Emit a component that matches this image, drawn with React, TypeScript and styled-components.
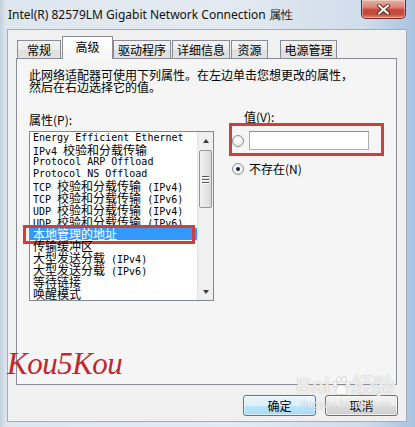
import React from 'react';
import styled, { createGlobalStyle, css } from 'styled-components';

const GlobalStyle = createGlobalStyle`
  html, body {
    margin: 0;
    padding: 0;
    background: #ffffff;
  }
  * {
    box-sizing: border-box;
  }
`;

const UI_FONT = `"Noto Sans CJK SC", "Noto Sans", sans-serif`;

const Window = styled.div`
  position: relative;
  width: 415px;
  height: 427px;
  display: flex;
  flex-direction: column;
  padding: 0 8px 5px 7px;
  overflow: hidden;
  background: linear-gradient(
    90deg,
    #c3d0de 0px,
    #dde6ef 6px,
    #e4eaf1 55%,
    #cfdceb 88%,
    #a9c3e0 100%
  );
  font-family: ${UI_FONT};
  font-size: 12px;
  color: #000;
`;

const TitleBar = styled.div`
  height: 29px;
  display: flex;
  justify-content: space-between;
  align-items: flex-start;
  padding-left: 1px;
`;

const TitleText = styled.div`
  align-self: center;
  font-family: "Noto Sans", sans-serif;
  font-size: 12px;
  line-height: 14px;
  margin-top: 1px;
  color: #111;
  white-space: nowrap;
`;

const CloseButton = styled.div`
  width: 45px;
  height: 19px;
  margin-right: 1px;
  border: 1px solid #6e2b24;
  border-top: none;
  border-radius: 0 0 5px 5px;
  background: linear-gradient(
    180deg,
    #e8b1a6 0%,
    #d98577 40%,
    #c5473b 55%,
    #c64b3d 80%,
    #dc8d7c 100%
  );
  box-shadow: inset 0 0 0 1px rgba(255, 255, 255, 0.35);
  display: flex;
  align-items: center;
  justify-content: center;
`;

const Client = styled.div`
  flex: 1;
  display: flex;
  flex-direction: column;
  border: 1px solid #a3aebb;
  background: #f0f0f0;
  padding: 6px 9px 5px 8px;
`;

const TabRow = styled.div`
  display: flex;
  align-items: flex-end;
  height: 23px;
  margin-bottom: -1px;
  padding-left: 1px;
  position: relative;
  z-index: 1;
`;

const Tab = styled.div<{ $active?: boolean; $w: number; $ml?: number }>`
  width: ${p => p.$w}px;
  margin-left: ${p => p.$ml ?? 0}px;
  border: 1px solid #898c95;
  border-bottom: none;
  display: flex;
  justify-content: center;
  font-size: 12px;
  line-height: 14px;
  white-space: nowrap;
  ${p =>
    p.$active
      ? css`
          height: 23px;
          padding-top: 3px;
          background: linear-gradient(180deg, #ffffff 0%, #f6f6f6 100%);
        `
      : css`
          height: 18px;
          margin-bottom: 1px;
          padding-top: 2px;
          background: linear-gradient(180deg, #f3f3f3 0%, #ebebeb 50%, #dedede 51%, #e3e3e3 100%);
        `}
`;

const Panel = styled.div`
  flex: 1;
  border: 1px solid #898c95;
  background: #f5f5f5;
  padding: 10px 12px;
  display: flex;
  flex-direction: column;
`;

const Description = styled.div`
  font-size: 12px;
  line-height: 12px;
  white-space: nowrap;
`;

const Columns = styled.div`
  display: flex;
  gap: 15px;
  margin-top: 18px;
`;

const LeftColumn = styled.div`
  width: 185px;
  padding-top: 3px;
  display: flex;
  flex-direction: column;
`;

const FieldLabel = styled.div<{ $indent?: number }>`
  font-size: 12px;
  line-height: 12px;
  margin-left: ${p => p.$indent ?? 0}px;
  white-space: nowrap;
`;

const ListBox = styled.div`
  margin-top: 5px;
  height: 170px;
  border: 1px solid #828790;
  background: #fff;
  display: flex;
`;

const ListItems = styled.div`
  flex: 1;
  display: flex;
  flex-direction: column;
`;

const ListItem = styled.div<{ $selected?: boolean }>`
  position: relative;
  height: 12px;
  line-height: 12px;
  padding-left: 3px;
  white-space: pre;
  font-family: "DejaVu Sans Mono", "Liberation Mono", monospace;
  font-size: 10px;
  color: ${p => (p.$selected ? '#fff' : '#000')};
  background: ${p => (p.$selected ? '#3399ff' : 'transparent')};
`;

const Cjk = styled.span`
  font-family: "Noto Sans CJK SC", sans-serif;
  font-size: 12px;
  line-height: 12px;
`;

const RedMark = styled.div`
  position: absolute;
  left: -7px;
  right: 2px;
  top: -3px;
  bottom: -4px;
  border: 3px solid #c9403d;
  pointer-events: none;
`;

const ScrollBar = styled.div`
  width: 16px;
  border-left: 1px solid #e6e6e6;
  background: #f0f0f0;
  display: flex;
  flex-direction: column;
`;

const ScrollArrow = styled.div<{ $down?: boolean }>`
  height: 17px;
  display: flex;
  align-items: center;
  justify-content: center;

  &::after {
    content: '';
    width: 0;
    height: 0;
    border-left: 3.5px solid transparent;
    border-right: 3.5px solid transparent;
    ${p =>
      p.$down
        ? css`border-top: 4px solid #3b3b3b;`
        : css`border-bottom: 4px solid #3b3b3b;`}
  }
`;

const Track = styled.div`
  flex: 1;
  padding-top: 1px;
`;

const Thumb = styled.div`
  height: 58px;
  margin: 0 1px;
  border: 1px solid #979797;
  border-radius: 2px;
  background: linear-gradient(90deg, #f2f2f2 0%, #e6e6e6 50%, #d8d8d8 100%);
  display: flex;
  flex-direction: column;
  align-items: center;
  justify-content: center;
  gap: 2px;
`;

const Grip = styled.div`
  width: 7px;
  height: 1px;
  background: #595959;
  box-shadow: 0 1px 0 #ffffff;
`;

const RightColumn = styled.div`
  flex: 1;
  display: flex;
  flex-direction: column;
`;

const ValueFrame = styled.div`
  width: 155px;
  border: 3px solid #c9403d;
  padding: 5px 12px 3px 0;
  display: flex;
  align-items: center;
  gap: 5px;
`;

const Radio = styled.span<{ $checked?: boolean }>`
  width: 12px;
  height: 12px;
  flex: none;
  border-radius: 50%;
  border: 1px solid #8e8f8f;
  background: radial-gradient(circle at 50% 40%, #ffffff 0%, #ececec 70%, #dcdcdc 100%);
  display: flex;
  align-items: center;
  justify-content: center;

  &::after {
    content: '';
    width: 4px;
    height: 4px;
    border-radius: 50%;
    background: ${p => (p.$checked ? '#16213a' : 'transparent')};
  }
`;

const TextBox = styled.div`
  width: 121px;
  height: 19px;
  border: 1px solid #abadb3;
  border-top-color: #8c8f96;
  background: #fff;
`;

const RadioRow = styled.div`
  display: flex;
  align-items: center;
  gap: 5px;
  margin-top: 7px;
  padding-left: 3px;
  line-height: 12px;
`;

const ButtonRow = styled.div`
  display: flex;
  justify-content: flex-end;
  gap: 9px;
  margin-top: 10px;
  margin-right: -1px;
`;

const DialogButton = styled.div<{ $primary?: boolean }>`
  width: 73px;
  height: 21px;
  border-radius: 3px;
  display: flex;
  align-items: center;
  justify-content: center;
  font-size: 12px;
  line-height: 12px;
  ${p =>
    p.$primary
      ? css`
          border: 1px solid #3c7fb1;
          background: linear-gradient(180deg, #eaf6fd 0%, #d9f0fc 50%, #bee6fd 51%, #a7d9f5 100%);
          box-shadow: inset 0 0 0 1px rgba(255, 255, 255, 0.6);
        `
      : css`
          border: 1px solid #707070;
          background: linear-gradient(180deg, #f2f2f2 0%, #ebebeb 50%, #dddddd 51%, #cfcfcf 100%);
          box-shadow: inset 0 0 0 1px rgba(255, 255, 255, 0.7);
        `}
`;

const Signature = styled.div`
  position: absolute;
  left: 7px;
  top: 348px;
  font-family: "Liberation Serif", serif;
  font-style: italic;
  font-size: 31px;
  line-height: 31px;
  color: #c1272d;
  letter-spacing: -0.5px;
  pointer-events: none;
`;

const BaiduMark = styled.div`
  position: absolute;
  left: 296px;
  top: 375px;
  display: flex;
  flex-direction: column;
  align-items: center;
  color: rgba(255, 255, 255, 0.8);
  text-shadow: 0 0 1px rgba(140, 140, 140, 0.7);
  pointer-events: none;
`;

const BaiduLogo = styled.div`
  display: flex;
  align-items: flex-end;
  font-family: "Liberation Sans", sans-serif;
  font-weight: bold;
  font-size: 22px;
  line-height: 22px;
`;

const BaiduSub = styled.div`
  font-family: "Liberation Sans", sans-serif;
  font-size: 10px;
  line-height: 10px;
  margin-top: 3px;
  letter-spacing: 0.5px;
`;

const ITEMS = [
  'Energy Efficient Ethernet',
  'IPv4 校验和分载传输',
  'Protocol ARP Offload',
  'Protocol NS Offload',
  'TCP 校验和分载传输 (IPv4)',
  'TCP 校验和分载传输 (IPv6)',
  'UDP 校验和分载传输 (IPv4)',
  'UDP 校验和分载传输 (IPv6)',
  '本地管理的地址',
  '传输缓冲区',
  '大型发送分载 (IPv4)',
  '大型发送分载 (IPv6)',
  '等待链接',
  '唤醒模式',
];

const SELECTED = 8;

// split latin / chinese runs so latin stays in the narrow mono face
const mixed = (s: string) =>
  s.split(/([\u3400-\u9fff]+)/).filter(Boolean).map((part, i) =>
    /[\u3400-\u9fff]/.test(part) ? <Cjk key={i}>{part}</Cjk> : <span key={i}>{part}</span>
  );

const TABS = [
  { label: '常规', w: 44, ml: 0 },
  { label: '高级', w: 51, ml: 1, active: true },
  { label: '驱动程序', w: 58, ml: 0 },
  { label: '详细信息', w: 58, ml: 1 },
  { label: '资源', w: 37, ml: 1 },
  { label: '电源管理', w: 57, ml: 12 },
];

export default function App() {
  return (
    <>
      <GlobalStyle />
      <Window>
        <TitleBar>
          <TitleText>Intel(R) 82579LM Gigabit Network Connection 属性</TitleText>
          <CloseButton>
            <svg width="13" height="11" viewBox="0 0 13 11">
              <path d="M2 1.5 L11 9.5 M11 1.5 L2 9.5" stroke="#5a2019" strokeWidth="4" strokeLinecap="round" />
              <path d="M2 1.5 L11 9.5 M11 1.5 L2 9.5" stroke="#ffffff" strokeWidth="2.2" strokeLinecap="round" />
            </svg>
          </CloseButton>
        </TitleBar>

        <Client>
          <TabRow>
            {TABS.map(t => (
              <Tab key={t.label} $w={t.w} $ml={t.ml} $active={t.active}>
                {t.label}
              </Tab>
            ))}
          </TabRow>

          <Panel>
            <Description>
              此网络适配器可使用下列属性。在左边单击您想更改的属性，
              <br />
              然后在右边选择它的值。
            </Description>

            <Columns>
              <LeftColumn>
                <FieldLabel>属性(P):</FieldLabel>
                <ListBox>
                  <ListItems>
                    {ITEMS.map((item, i) => (
                      <ListItem key={item} $selected={i === SELECTED}>
                        {mixed(item)}
                        {i === SELECTED && <RedMark />}
                      </ListItem>
                    ))}
                  </ListItems>
                  <ScrollBar>
                    <ScrollArrow />
                    <Track>
                      <Thumb>
                        <Grip />
                        <Grip />
                        <Grip />
                      </Thumb>
                    </Track>
                    <ScrollArrow $down />
                  </ScrollBar>
                </ListBox>
              </LeftColumn>

              <RightColumn>
                <FieldLabel $indent={15}>值(V):</FieldLabel>
                <ValueFrame>
                  <Radio />
                  <TextBox />
                </ValueFrame>
                <RadioRow>
                  <Radio $checked />
                  <span>不存在(N)</span>
                </RadioRow>
              </RightColumn>
            </Columns>
          </Panel>

          <ButtonRow>
            <DialogButton $primary>确定</DialogButton>
            <DialogButton>取消</DialogButton>
          </ButtonRow>
        </Client>

        <Signature>Kou5Kou</Signature>
        <BaiduMark>
          <BaiduLogo>
            Bai
            <svg width="22" height="22" viewBox="0 0 22 22">
              <g fill="rgba(255,255,255,0.85)" stroke="rgba(140,140,140,0.55)" strokeWidth="0.6">
                <ellipse cx="5" cy="9" rx="2.2" ry="2.8" />
                <ellipse cx="9" cy="4.5" rx="2.2" ry="2.8" />
                <ellipse cx="14" cy="4.5" rx="2.2" ry="2.8" />
                <ellipse cx="18" cy="9" rx="2.2" ry="2.8" />
                <path d="M11.5 10 C8 10 5 15 6 18 C7 20.5 10 19.5 11.5 19.5 C13 19.5 16 20.5 17 18 C18 15 15 10 11.5 10 Z" />
              </g>
            </svg>
            <span>经验</span>
          </BaiduLogo>
          <BaiduSub>jingyan.baidu.com</BaiduSub>
        </BaiduMark>
      </Window>
    </>
  );
}
